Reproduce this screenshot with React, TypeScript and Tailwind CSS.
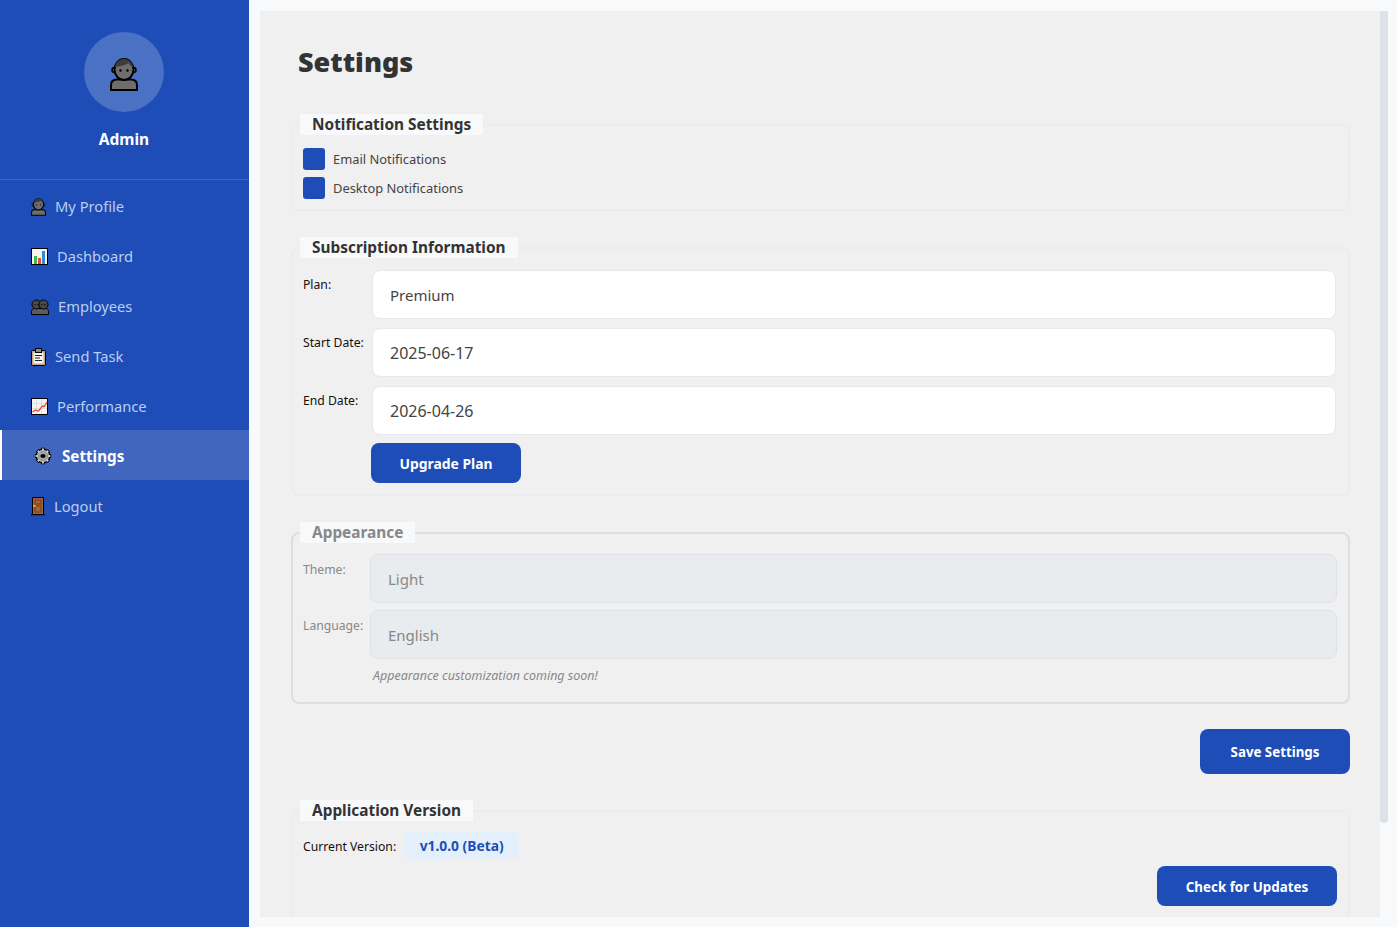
import React from 'react';

function PersonIcon({ className }: { className: string }) {
  return (
    <svg viewBox="0 0 28 33" className={className}>
      <path d="M1 32v-5c0-3.500 2.500-5.500 6-5.500h14c3.500 0 6 2 6 5.500v5z" fill="#6e6e6e" stroke="#000" strokeWidth="2" />
      <circle cx="4.500" cy="12" r="2.500" fill="#6e6e6e" stroke="#000" strokeWidth="1.500" />
      <circle cx="23.500" cy="12" r="2.500" fill="#6e6e6e" stroke="#000" strokeWidth="1.500" />
      <ellipse cx="14" cy="11.500" rx="9.500" ry="10.500" fill="#6e6e6e" stroke="#000" strokeWidth="2" />
      <path d="M5 9C5.500 4 9 1 14 1s8.500 3 9 8c-2-.5-3.500-2-4.500-4-3 2.500-8.500 3-13.500 4z" fill="#3c3c3c" />
      <circle cx="10.500" cy="12.500" r="1.200" fill="#000" />
      <circle cx="17.500" cy="12.500" r="1.200" fill="#000" />
    </svg>
  );
}

function ChartIcon() {
  return (
    <svg viewBox="0 0 17 17" className="w-[17px] h-[17px]">
      <rect x="0.500" y="0.500" width="16" height="16" fill="#f4f4f4" stroke="#000" />
      <rect x="3" y="8" width="3" height="8" fill="#3fb950" />
      <rect x="7" y="10" width="3" height="6" fill="#e5512d" />
      <rect x="11" y="3" width="3" height="13" fill="#2f8fd0" />
    </svg>
  );
}

function GroupIcon() {
  return (
    <svg viewBox="0 0 18 16" className="w-[18px] h-[16px]">
      <path d="M0.500 15.500v-3c0-2 1.500-3 3-3h11c1.500 0 3 1 3 3v3z" fill="#5c5c5c" stroke="#000" />
      <circle cx="5.500" cy="5.500" r="4.500" fill="#4a4a4a" stroke="#000" />
      <circle cx="12.500" cy="5.500" r="4.500" fill="#4a4a4a" stroke="#000" />
      <rect x="3.500" y="5" width="1" height="1.500" fill="#000" />
      <rect x="6.500" y="5" width="1" height="1.500" fill="#000" />
      <rect x="10.500" y="5" width="1" height="1.500" fill="#000" />
      <rect x="13.500" y="5" width="1" height="1.500" fill="#000" />
    </svg>
  );
}

function ClipboardIcon() {
  return (
    <svg viewBox="0 0 15 18" className="w-[15px] h-[18px]">
      <rect x="0.500" y="2.500" width="14" height="15" rx="1" fill="#c9a57c" stroke="#000" />
      <rect x="2.500" y="4.500" width="10" height="11" fill="#f3f3f3" />
      <rect x="4.500" y="0.500" width="6" height="4" fill="#8c8c8c" stroke="#000" />
      <path d="M4 7.500h7M4 10h5M4 12.500h7" stroke="#222" strokeWidth="1" />
    </svg>
  );
}

function TrendIcon() {
  return (
    <svg viewBox="0 0 17 17" className="w-[17px] h-[17px]">
      <rect x="0.500" y="0.500" width="16" height="16" fill="#f4f4f4" stroke="#000" />
      <path d="M5.500 1v15M10.500 1v15M1 5.500h15M1 10.500h15" stroke="#d8d8d8" strokeWidth="0.700" />
      <path d="M1.500 14l3-2 3 1 4-5 2 .5 2.500-4.500" fill="none" stroke="#e5512d" strokeWidth="1.300" />
    </svg>
  );
}

function GearIcon() {
  return (
    <svg viewBox="0 0 18 18" className="w-[18px] h-[18px]">
      <circle cx="9" cy="9" r="6.800" fill="#c8c8c8" stroke="#000" strokeWidth="1.500" />
      <path d="M9 .8v16.400M.8 9h16.400M3.200 3.200l11.600 11.600M14.800 3.200L3.200 14.800" stroke="#000" strokeWidth="3.600" />
      <path d="M9 1.600v14.800M1.600 9h14.800M3.800 3.800l10.400 10.400M14.200 3.800L3.800 14.200" stroke="#c8c8c8" strokeWidth="2" />
      <circle cx="9" cy="9" r="6" fill="#c8c8c8" />
      <circle cx="9" cy="9" r="4.600" fill="#a8a8a8" stroke="#8a8a8a" />
      <ellipse cx="9" cy="9" rx="2.600" ry="2.100" fill="#000" />
    </svg>
  );
}

function DoorIcon() {
  return (
    <svg viewBox="0 0 14 19" className="w-[14px] h-[19px]">
      <rect x="0.250" y="17" width="13.500" height="1.750" fill="#8a8a8a" stroke="#000" strokeWidth="0.500" />
      <rect x="1.500" y="0.500" width="11" height="17" fill="#a8623a" stroke="#000" />
      <rect x="4" y="3" width="6" height="4" fill="none" stroke="#6f3c1e" />
      <rect x="4" y="9" width="6" height="6" fill="none" stroke="#6f3c1e" />
      <rect x="2.500" y="8" width="2" height="2" fill="#e8c23c" />
    </svg>
  );
}

const navItems = [
  { label: 'My Profile', icon: <PersonIcon className="w-[15px] h-[18px]" /> },
  { label: 'Dashboard', icon: <ChartIcon /> },
  { label: 'Employees', icon: <GroupIcon /> },
  { label: 'Send Task', icon: <ClipboardIcon /> },
  { label: 'Performance', icon: <TrendIcon /> },
  { label: 'Settings', icon: <GearIcon />, active: true },
  { label: 'Logout', icon: <DoorIcon /> },
];

function Sidebar() {
  return (
    <aside className="w-[249px] shrink-0 h-full bg-[#1e4db7]">
      <div className="h-[180px] border-b border-[#3a63c0] pt-[32px] pr-px flex flex-col items-center">
        <div className="w-20 h-20 pt-1 rounded-full bg-[#4b71c5] flex items-center justify-center">
          <PersonIcon className="w-[28px] h-[33px]" />
        </div>
        <div className="mt-[16px] text-white font-bold text-[15.5px] leading-[22px]">Admin</div>
      </div>
      <nav>
        {navItems.map((item) => (
          <a
            key={item.label}
            className={
              item.active
                ? 'h-[50px] flex items-center gap-[10px] pl-[32px] pt-[2px] border-l-2 border-white bg-[#4066c0] text-white font-bold text-[15.2px]'
                : 'h-[50px] flex items-center gap-[9px] pl-[31px] pt-[3px] text-[#b9cdf0] text-[14.7px]'
            }
          >
            {item.icon}
            <span>{item.label}</span>
          </a>
        ))}
      </nav>
    </aside>
  );
}

function Section({ title, muted, className, children }: { title: string; muted?: boolean; className?: string; children: React.ReactNode }) {
  return (
    <fieldset className={`rounded-lg border-2 pl-[10px] pr-[11px] ${muted ? 'border-[#dedede]' : 'border-[#e9edf1]'} ${className ?? ''}`}>
      <legend className={`-ml-[3px] px-3 h-[21px] bg-[#f8f9fa] font-bold text-[15.4px] leading-[21px] ${muted ? 'text-[#888]' : 'text-[#333]'}`}>
        {title}
      </legend>
      {children}
    </fieldset>
  );
}

function Field({ label, value, labelWidth, valueSize, muted }: { label: string; value: string; labelWidth: string; valueSize: string; muted?: boolean }) {
  return (
    <div className="flex items-start">
      <label className={`${labelWidth} shrink-0 text-[12.2px] leading-[17px] ${muted ? 'pt-[7px] text-[#888]' : 'pt-[6px] text-[#111]'}`}>{label}</label>
      <input
        readOnly
        disabled={muted}
        value={value}
        className={
          muted
            ? `flex-1 h-[49px] rounded-lg border border-[#dee2e6] bg-[#e9ecef] px-[17px] ${valueSize} text-[#888] outline-none`
            : `flex-1 h-[49px] mr-px rounded-lg border border-[#e6e9ed] bg-white px-[17px] ${valueSize} text-[#444] outline-none`
        }
      />
    </div>
  );
}

function PrimaryButton({ className, children }: { className: string; children: React.ReactNode }) {
  return <button className={`rounded-lg bg-[#1e4db7] pt-[2px] text-white font-bold ${className}`}>{children}</button>;
}

export default function App() {
  return (
    <div className="h-[927px] flex bg-[#f8f9fa] overflow-hidden" style={{ fontFamily: '"Noto Sans", sans-serif' }}>
      <Sidebar />
      <main className="flex-1 flex pl-[11px] pr-[9px] pt-[11px] pb-[10px] min-w-0">
        <div className="flex-1 min-w-0 overflow-hidden bg-[#f0f0f0] pl-[31px] pr-[30px] pt-[30px]">
          <h1 className="ml-[7px] text-[27px] leading-[42px] font-black text-[#333]">Settings</h1>

          <Section title="Notification Settings" className="mt-[31px] pb-[10px]">
            <div className="mt-[13px] flex flex-col gap-[7px]">
              {['Email Notifications', 'Desktop Notifications'].map((label) => (
                <label key={label} className="flex items-center gap-2 text-[12.9px] text-[#444]">
                  <span className="w-[22px] h-[22px] rounded-[3px] bg-[#1e4db7]" />
                  <span className="pt-px">{label}</span>
                </label>
              ))}
            </div>
          </Section>

          <Section title="Subscription Information" className="mt-[26px] pb-[11px]">
            <div className="mt-[12px] flex flex-col gap-[9px]">
              <Field label="Plan:" value="Premium" labelWidth="w-[69px]" valueSize="text-[15px]" />
              <Field label="Start Date:" value="2025-06-17" labelWidth="w-[69px]" valueSize="text-[16px]" />
              <Field label="End Date:" value="2026-04-26" labelWidth="w-[69px]" valueSize="text-[16px]" />
            </div>
            <PrimaryButton className="mt-[8px] ml-[68px] w-[150px] h-[40px] block text-[13.9px]">Upgrade Plan</PrimaryButton>
          </Section>

          <Section title="Appearance" muted className="mt-[26px] pb-[18px]">
            <div className="mt-[11px] flex flex-col gap-[7px]">
              <Field label="Theme:" value="Light" labelWidth="w-[67px]" valueSize="text-[15px]" muted />
              <Field label="Language:" value="English" labelWidth="w-[67px]" valueSize="text-[15px]" muted />
            </div>
            <p className="mt-[8px] ml-[70px] text-[12.5px] leading-[17px] italic text-[#888]">Appearance customization coming soon!</p>
          </Section>

          <div className="mt-[25px] flex justify-end">
            <PrimaryButton className="w-[150px] h-[45px] text-[13.3px]">Save Settings</PrimaryButton>
          </div>

          <Section title="Application Version" className="mt-[26px] pb-[12px]">
            <div className="mt-[11px] flex items-center gap-2">
              <span className="pt-[3px] text-[12.2px] text-[#111]">Current Version:</span>
              <span className="w-[115px] h-[27px] pt-[2px] rounded-md bg-[#e3f0fc] text-[#1e4db7] font-bold text-[13.8px] flex items-center justify-center">v1.0.0 (Beta)</span>
            </div>
            <div className="mt-[7px] flex justify-end">
              <PrimaryButton className="w-[180px] h-[40px] text-[13.4px]">Check for Updates</PrimaryButton>
            </div>
          </Section>
        </div>
        <div className="w-2 shrink-0">
          <div className="h-[812px] bg-[#dee1e6] rounded-b" />
        </div>
      </main>
    </div>
  );
}
